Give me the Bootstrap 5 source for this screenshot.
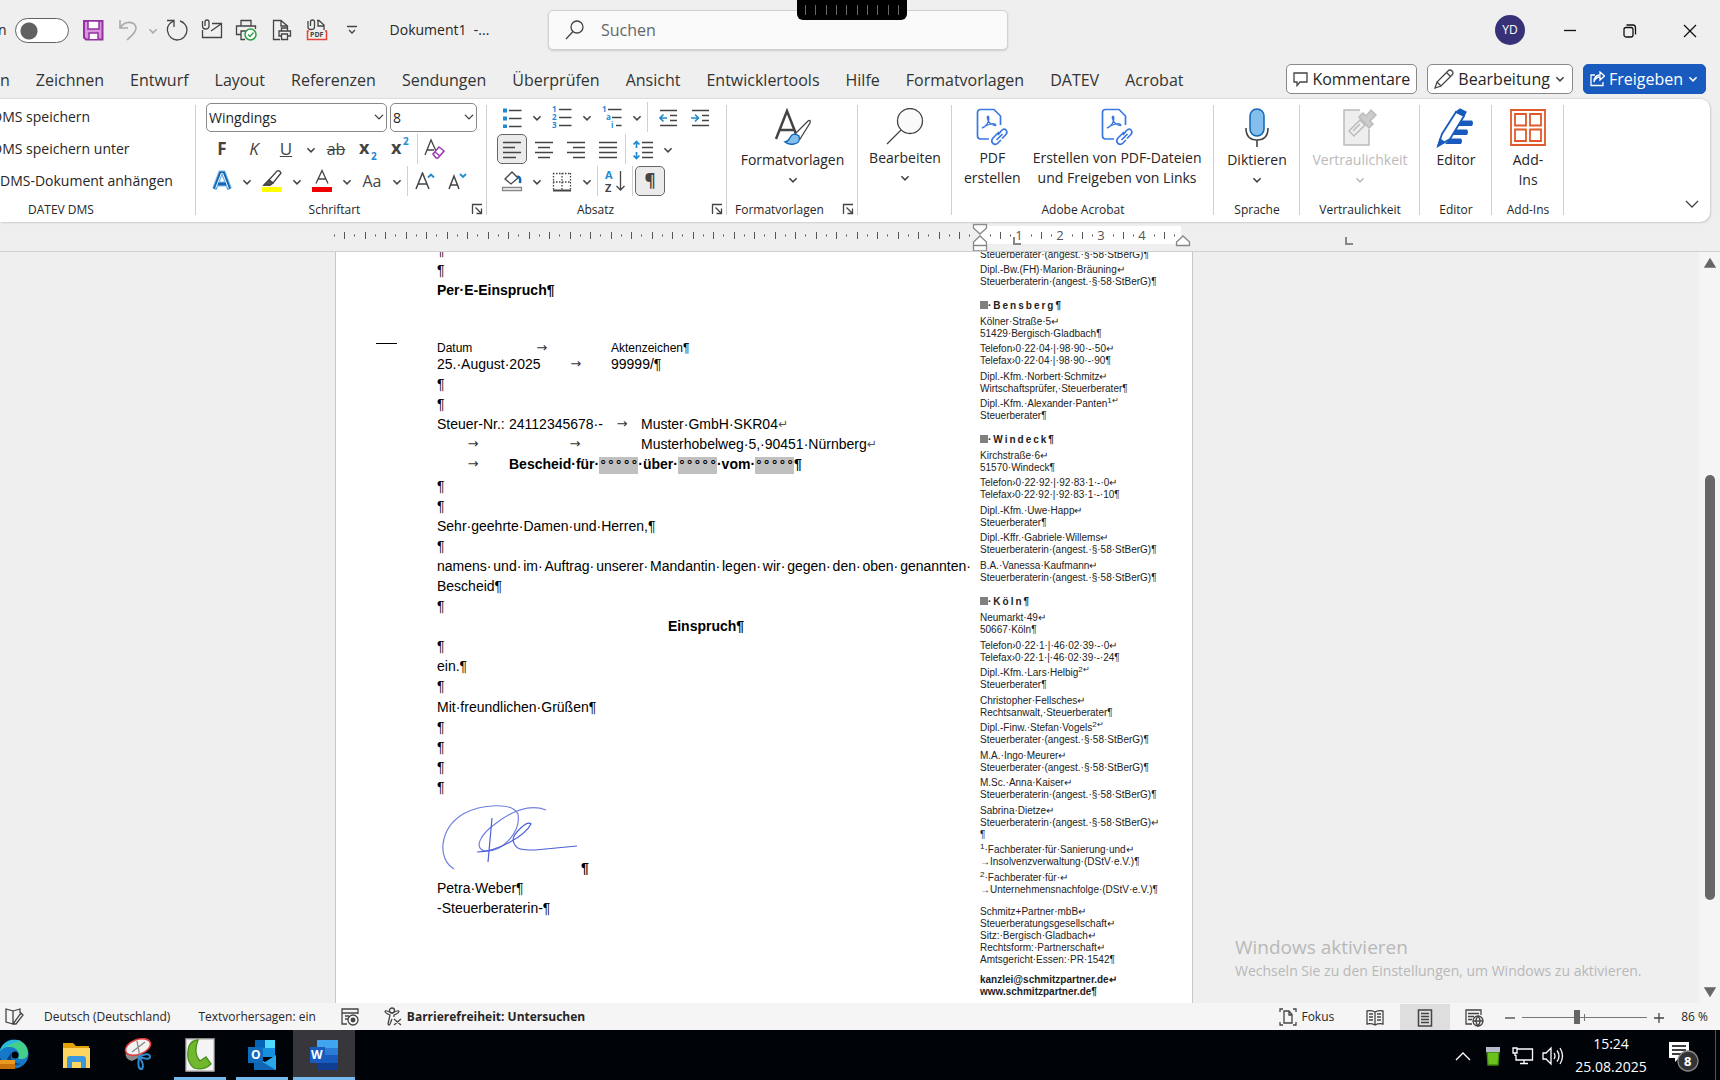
<!DOCTYPE html>
<html lang="de">
<head>
    <meta charset="UTF-8">
    <meta name="viewport" content="width=device-width, initial-scale=1.0">
    <title>Dokument1 - Word</title>
    <link href="https://cdn.jsdelivr.net/npm/bootstrap@5.3.0/dist/css/bootstrap.min.css" rel="stylesheet">
    <style>
        body {
            font-family: "Open Sans", "Noto Sans", sans-serif;
            font-size: 14px;
            line-height: 20px;
            color: #262626;
            background: #efefef;
        }

        button {
            border: 0;
            background: none;
            padding: 0;
            color: inherit;
        }

        svg {
            flex: none;
            fill: none;
            stroke: #444;
            stroke-width: 1.3;
        }

        /* Titelleiste */
        .title-bar { height: 60px; }
        .quick-access { width: 548px; }
        .quick-access button { width: 35px; }
        .quick-access .arrow-btn { width: 14px; }

        .auto-save {
            appearance: none;
            width: 54px;
            height: 25px;
            margin: 0 7px 0 8px;
            border: 1px solid #616161;
            border-radius: 13px;
            background: #fff radial-gradient(circle at 13px 12px, #616161 8px, transparent 9px);
        }

        .auto-save-name { margin-left: -2px; }

        .search-box {
            width: 460px;
            height: 40px;
            border: 1px solid #d1d1d1;
            border-radius: 5px;
            background: #fafafa;
            box-shadow: 0 1px 2px #ccc;
        }

        .search-box input {
            border: 0;
            background: none;
            outline: 0;
            font-size: 16px;
        }

        .search-box input::placeholder { color: #666; }
        .window-btn { width: 60px; height: 30px; }

        .avatar {
            width: 30px;
            height: 30px;
            border-radius: 50%;
            background: #373277;
            color: #fff;
            font-size: 12px;
        }

        .session-grip {
            top: 0;
            left: 797px;
            width: 110px;
            height: 20px;
            padding: 0 8px;
            background: #000;
            border-radius: 0 0 6px 6px;
        }

        .session-grip i { width: 1px; height: 10px; background: #666; }

        /* Registerkarten */
        .tab-row { height: 38px; font-size: 16px; }
        .tab-row .nav-link { padding: 2px 13px 0; color: #333; }
        .tab-row nav { margin-left: -22px; }
        .tab-actions { gap: 10px; margin-right: 14px; }

        .action-btn {
            height: 30px;
            padding: 0 6px;
            border: 1px solid #888;
            border-radius: 5px;
            background: #fff;
            font-size: 16px;
        }

        .action-btn.share { background: #185abd; border-color: #185abd; color: #fff; }
        .share svg { stroke: #fff; }

        /* Menüband */
        .ribbon {
            height: 124px;
            margin-right: 10px;
            background: #fff;
            border-top: 1px solid #ddd;
            border-radius: 0 10px 10px 0;
            box-shadow: 1px 1px 2px #ccc;
        }

        .ribbon-group { height: 123px; padding-top: 2px; }

        .ribbon-group::after {
            content: "";
            position: absolute;
            right: 0;
            top: 6px;
            bottom: 7px;
            width: 1px;
            background: #d0d0d0;
        }

        .group-name { height: 22px; font-size: 12px; }
        .tool-row { height: 32px; }
        .g-dms { width: 196px; }
        .clipped { margin-left: -8px; }
        .g-font { width: 291px; padding-left: 10px; }
        .g-para { width: 240px; padding-left: 9px; }
        .g-style { width: 131px; }
        .g-edit { width: 94px; }
        .g-acro { width: 262px; }
        .g-voice { width: 86px; }
        .g-label { width: 120px; color: #bbb; }
        .g-small { width: 72px; }
        .tool { width: 30px; height: 30px; margin: 0 1px; border-radius: 5px; font-size: 17px; color: #444; }
        .tool.active { border: 1px solid #666; background: #ebebeb; }
        .drop { width: 18px; height: 30px; }
        .rule { width: 1px; height: 30px; margin: 0 1px; background: #d0d0d0; }
        .launcher { right: 4px; bottom: 7px; }
        .big-tool { min-height: 88px; margin-top: 7px; }
        .big-tool svg { margin-bottom: 2px; }
        .ribbon text { stroke: none; }

        .font-select {
            height: 29px;
            padding: 0 18px 0 2px;
            border: 1px solid #888;
            border-radius: 5px;
            background-position: right 2px center;
            background-size: 10px;
            font-size: 14px;
        }

        .family-select { width: 181px; margin-right: 3px; }
        .size-select { width: 87px; }

        /* Lineal */
        .ruler { height: 30px; border-bottom: 1px solid #d0d0d0; }
        .ruler text { font-size: 13px; fill: #555; stroke: none; }

        /* Dokument */
        .paper {
            width: 858px;
            margin-left: 335px;
            padding-left: 101px;
            background: #fff;
            border: solid #c8c8c8;
            border-width: 0 1px;
            font-family: "Liberation Sans", Arial, sans-serif;
            color: #000;
        }

        .letter { width: 538px; margin-top: -12px; font-size: 14px; line-height: 20px; }
        .letter p { margin: 0; min-height: 20px; white-space: nowrap; }
        .letter .full-line { width: 534px; }
        .letter .caption { font-size: 12px; line-height: 12px; min-height: 12px; margin-top: 42px; }
        .tab-mark { font-family: "DejaVu Sans", sans-serif; font-size: 13px; color: #333; text-align: center; }
        .return-mark { font-family: "DejaVu Sans", sans-serif; font-size: 12px; color: #555; }
        .stop-1 { width: 72px; }
        .stop-2 { width: 132px; }
        .stop-wide { width: 174px; }

        .field {
            background: #c0c0c0;
            font-family: "Liberation Mono", monospace;
            font-size: 13px;
            padding: 1px 0;
        }

        .fold-mark { left: 40px; top: 91px; width: 21px; height: 1px; background: #000; }
        .letter .closing { margin-top: 1px; }
        .signature { height: 81px; }

        .letterhead {
            width: 210px;
            margin: -3px 0 0 5px;
            font-size: 10px;
            line-height: 12px;
            color: #222;
            white-space: nowrap;
        }

        .letterhead p { margin: 0 0 3px; }
        .letterhead p:nth-of-type(even) { margin-bottom: 4px; }
        .letterhead h6 { margin: 12px 0 4px; font-size: 10px; line-height: 12px; font-weight: 700; letter-spacing: 2px; }
        .letterhead h6 i { display: inline-block; width: 8px; height: 8px; background: #808080; }
        .letterhead sup { font-size: 8px; line-height: 0; }
        .letterhead .imprint { margin-top: 10px; }
        .letterhead .web { margin-top: 8px; }

        .activation { left: 1235px; bottom: 21px; color: #b8b8b8; font-size: 14px; line-height: 22px; }
        .activation strong { font-size: 19px; font-weight: 400; line-height: 24px; }

        .scroll-track { width: 21px; background: #f5f5f5; }
        .scroll-thumb { width: 10px; height: 425px; margin-top: 205px; border-radius: 5px; background: #686868; }

        /* Statusleiste */
        .status-bar { height: 27px; padding-top: 1px; background: #f5f5f5; font-size: 12px; }
        .view-btn { width: 50px; height: 26px; }
        .view-btn.active { background: #dedede; }

        .zoom-range {
            appearance: none;
            width: 125px;
            height: 14px;
            margin: 0 6px;
            background: linear-gradient(#777, #777) center / 100% 1px no-repeat,
                linear-gradient(#777, #777) center / 1px 7px no-repeat;
        }

        .zoom-range::-webkit-slider-thumb { appearance: none; width: 6px; height: 14px; background: #666; }

        /* Taskleiste */
        .task-bar { height: 50px; background: #000308; color: #fff; }
        .task-bar svg { stroke: #fff; }
        .task-list { margin-left: -17px; }
        .task-btn { width: 62px; height: 50px; }
        .task-btn.running::after { content: ""; position: absolute; left: 5px; right: 5px; bottom: 0; height: 3px; background: #76b9ed; }
        .task-btn.current { background: #37373b; }
        .task-btn.current::after { left: 0; right: 0; }
        .tray-btn { width: 30px; }
        .clock { width: 86px; line-height: 23px; }
        .notice-btn { width: 53px; }
        .show-desktop { width: 5px; height: 50px; border-left: 1px solid #555; }
    </style>
</head>
<body class="vh-100 d-flex flex-column overflow-hidden">
    <svg class="d-none">
        <symbol id="down" viewBox="0 0 10 10"><path d="M2 3.5 5 6.5 8 3.5"/></symbol>
        <symbol id="launch" viewBox="0 0 12 12"><path d="M1.500 11V1.500H11M4.500 4.500 10 10M10.500 5.500V10.500H5.500"/></symbol>
        <symbol id="pdf-link" viewBox="0 0 32 38">
            <g stroke="#3a78e0" stroke-width="1.7">
                <path d="M13 31H4.500Q1.500 31 1.500 28V4.500Q1.500 1.500 4.500 1.500H18L24.500 8V17"/>
                <path d="M6 20C10 19 14 13 12.500 8.500C11 7 10 12 15 16C19 18 21 18 19 16C16 15 10 17 6 20Z" stroke-width="1.300"/>
                <path d="M23 24 20.500 26.500 17 30Q14.500 33 17 35.500Q19.500 37.500 22 35L25 32M22 27 25.500 22.500Q28 20 30 22Q32 24.500 29.500 27L26 30.500M20.500 32 26.500 26"/>
            </g>
        </symbol>
    </svg>

    <!-- Titelleiste -->
    <header class="title-bar d-flex align-items-center flex-shrink-0 position-relative">
        <div class="quick-access d-flex align-items-center flex-shrink-0">
            <label class="auto-save-name" for="autoSave">n</label>
            <input type="checkbox" class="auto-save" id="autoSave">
            <button aria-label="Speichern"><svg width="22" height="22"><path d="M2 2H20.500V20.500H4L2 18.500Z" fill="#d994dd" stroke="#9332a0" stroke-width="2"/><path d="M6 2H17V10H6ZM7 20V14H16V20" fill="#fff" stroke="#9332a0" stroke-width="1.500"/></svg></button>
            <button aria-label="Rückgängig"><svg width="20" height="22"><path d="M2 1V9H10M2 9C7 1 17 2 18 9C18 14 13 17 9 21" stroke="#aaa" stroke-width="1.600"/></svg></button>
            <button class="arrow-btn" aria-label="Mehr"><svg width="12" height="12" style="stroke:#aaa"><use href="#down"/></svg></button>
            <button aria-label="Wiederholen"><svg width="22" height="22"><path d="M1 1.500H8V8M8 2C3 4 1 8 1.500 12C2.500 18 7 21 11 21C17 21 21 16 21 11C21 7 18 3 14 2"/></svg></button>
            <button aria-label="Als Anlage senden"><svg width="22" height="22"><path d="M11 4.500H20.500V18.500H1.500V11M10 12 20 5M1.500 2V7Q1.500 10 4.500 10Q8 10 8 7V3Q8 1 6 1Q4 1 4 3V7"/></svg></button>
            <button aria-label="Schnelldruck"><svg width="24" height="22"><path d="M6 7V1.500H16V7M10 20.500H6V12H14M6 15.500H1.500V7H20.500V10"/><circle cx="15.500" cy="15.500" r="5.500" fill="#fff" stroke="#2f9e44" stroke-width="1.500"/><path d="M13 15.500 15 17.500 18.500 13.500" stroke="#2f9e44"/></svg></button>
            <button aria-label="Seitenansicht"><svg width="20" height="22"><path d="M8 20.500H1.500V1.500H9L15.500 7V9M9 1.500V7H15M9.500 12V9H15.500V12M9.500 17H7V12H18.500V17H16M9.500 15H15.500V20.500H9.500Z"/></svg></button>
            <button aria-label="Als PDF senden"><svg width="22" height="22"><path d="M11 1.500H13L18 6V11M12 2V7H18M2 2V8Q2 10.500 5 10.500Q8.500 10.500 8.500 8V3Q8.500 1 6.500 1Q4.500 1 4.500 3V7"/><path d="M3 12H1.500V20.500H20.500V12H19" stroke="#e5443b" stroke-width="1.500"/><text x="4" y="18" font-size="7" font-weight="700" fill="#444" stroke="none">PDF</text></svg></button>
            <button aria-label="Anpassen"><svg width="12" height="12"><path d="M1 1.500H11M3 5 6 8 9 5"/></svg></button>
            <span class="text-nowrap ps-3 ms-1">Dokument1 &nbsp;-...</span>
        </div>
        <form class="search-box d-flex align-items-center flex-shrink-1">
            <svg class="ms-3" width="20" height="20"><circle cx="12" cy="7" r="6"/><path d="M8 11.500 1 19"/></svg>
            <input class="flex-grow-1 ms-3 ps-0" type="text" placeholder="Suchen" aria-label="Suchen">
        </form>
        <div class="session-grip position-absolute d-flex align-items-center justify-content-between"><i></i><i></i><i></i><i></i><i></i><i></i><i></i><i></i><i></i><i></i></div>
        <div class="d-flex ms-auto">
            <button class="window-btn d-flex justify-content-center"><span class="avatar d-flex align-items-center justify-content-center">YD</span></button>
            <button class="window-btn" aria-label="Minimieren"><svg width="14" height="14"><path d="M1 6.500H13" stroke="#111"/></svg></button>
            <button class="window-btn" aria-label="Verkleinern"><svg width="14" height="14"><g stroke="#111"><rect x="1" y="3.500" width="9" height="9.500" rx="2"/><path d="M3.500 1H10Q12.500 1 12.500 4V10.500"/></g></svg></button>
            <button class="window-btn" aria-label="Schließen"><svg width="14" height="14"><path d="M1 1 13 13M13 1 1 13" stroke="#111"/></svg></button>
        </div>
    </header>

    <!-- Registerkarten -->
    <div class="tab-row d-flex align-items-center flex-shrink-0">
        <nav class="nav flex-nowrap text-nowrap">
            <a class="nav-link" href="#">en</a>
            <a class="nav-link" href="#">Zeichnen</a>
            <a class="nav-link" href="#">Entwurf</a>
            <a class="nav-link" href="#">Layout</a>
            <a class="nav-link" href="#">Referenzen</a>
            <a class="nav-link" href="#">Sendungen</a>
            <a class="nav-link" href="#">Überprüfen</a>
            <a class="nav-link" href="#">Ansicht</a>
            <a class="nav-link" href="#">Entwicklertools</a>
            <a class="nav-link" href="#">Hilfe</a>
            <a class="nav-link" href="#">Formatvorlagen</a>
            <a class="nav-link" href="#">DATEV</a>
            <a class="nav-link" href="#">Acrobat</a>
        </nav>
        <div class="tab-actions d-flex ms-auto text-nowrap">
            <button class="action-btn d-flex align-items-center gap-1"><svg width="15" height="16"><path d="M1 2H14V11H7L4 14.500V11H1Z"/></svg>Kommentare</button>
            <button class="action-btn d-flex align-items-center gap-1"><svg width="20" height="20"><path d="M1 19 3 13 14 2Q16 0 18 2Q20 4 18 6L7 17ZM12.500 3.500 16.500 7.500M3 13 7 17"/></svg>Bearbeitung<svg width="12" height="12"><use href="#down"/></svg></button>
            <button class="action-btn share d-flex align-items-center gap-1"><svg width="15" height="16"><path d="M5 4H1V14.500H13V11M4 11C5 7 7 6 10 6V9L14.500 5 10 1V4C6 4 4 7 4 11Z"/></svg>Freigeben<svg width="12" height="12"><use href="#down"/></svg></button>
        </div>
    </div>

    <!-- Menüband -->
    <div class="ribbon d-flex flex-shrink-0 position-relative text-nowrap">
        <section class="ribbon-group g-dms d-flex flex-column position-relative">
            <button class="tool-row clipped text-start">DMS speichern</button>
            <button class="tool-row clipped text-start">DMS speichern unter</button>
            <button class="tool-row text-start">DMS-Dokument anhängen</button>
            <div class="group-name mt-auto ps-4 ms-1">DATEV DMS</div>
        </section>

        <section class="ribbon-group g-font d-flex flex-column position-relative">
            <div class="tool-row d-flex align-items-center">
                <select class="form-select font-select family-select" aria-label="Schriftart"><option>Wingdings</option></select>
                <select class="form-select font-select size-select" aria-label="Schriftgrad"><option>8</option></select>
            </div>
            <div class="tool-row d-flex align-items-center">
                <button class="tool fw-bold">F</button>
                <button class="tool fst-italic">K</button>
                <button class="tool text-decoration-underline">U</button>
                <button class="drop" aria-label="Unterstreichung"><svg width="12" height="12"><use href="#down"/></svg></button>
                <button class="tool text-decoration-line-through fs-6">ab</button>
                <button class="tool" aria-label="Tiefgestellt"><svg width="20" height="24"><text x="1" y="17" font-size="18" font-weight="700" fill="#444">x</text><text x="13" y="23" font-size="10" font-weight="700" fill="#1f8ad2">2</text></svg></button>
                <button class="tool" aria-label="Hochgestellt"><svg width="20" height="24"><text x="1" y="17" font-size="18" font-weight="700" fill="#444">x</text><text x="13" y="8" font-size="10" font-weight="700" fill="#1f8ad2">2</text></svg></button>
                <span class="rule"></span>
                <button class="tool" aria-label="Formatierung löschen"><svg width="22" height="22"><path d="M1 17 7 2 12 13M3 12H10"/><path d="M9 16 15 9 20 13 14 20H12Z" fill="#fff" stroke="#9b3fae" stroke-width="1.600"/><path d="M11 14 16 18" stroke="#9b3fae" stroke-width="1.600"/></svg></button>
            </div>
            <div class="tool-row d-flex align-items-center">
                <button class="tool" aria-label="Texteffekte"><svg width="20" height="22"><path d="M2.500 19 8.500 3H11.500L17.500 19M6 14H14" stroke="#83beec" stroke-width="5"/><path d="M2.500 19 8.500 3H11.500L17.500 19M6 14H14" stroke="#1267b4" stroke-width="3"/><path d="M3.500 18.500 9.500 3M10.500 3 16.500 18.500" stroke="#fff" stroke-width="1"/></svg></button>
                <button class="drop" aria-label="Texteffekte wählen"><svg width="12" height="12"><use href="#down"/></svg></button>
                <button class="tool" aria-label="Hervorheben"><svg width="22" height="24"><path d="M8 11 16 2Q19 1 20 4L12 14ZM8 11 3 16H9L12 14"/><path d="M8 11 3 16H9L12 14Z" fill="#555"/><path d="M1 20.500H21" stroke="#ff0" stroke-width="5"/></svg></button>
                <button class="drop" aria-label="Hervorhebungsfarbe"><svg width="12" height="12"><use href="#down"/></svg></button>
                <button class="tool" aria-label="Schriftfarbe"><svg width="22" height="24"><path d="M5 14.500 11 1.500 17 14.500M7 10H15"/><path d="M1 20.500H21" stroke="#f00000" stroke-width="5"/></svg></button>
                <button class="drop" aria-label="Schriftfarbe wählen"><svg width="12" height="12"><use href="#down"/></svg></button>
                <button class="tool fs-6">Aa</button>
                <button class="drop" aria-label="Groß- und Kleinschreibung"><svg width="12" height="12"><use href="#down"/></svg></button>
                <span class="rule"></span>
                <button class="tool" aria-label="Größer"><svg width="20" height="20"><path d="M1 17 7.500 1 14 17M3.500 12H12" stroke-width="1.500"/><path d="M13 5.500 16 2.500 19 5.500" stroke="#1f8ad2" stroke-width="1.800"/></svg></button>
                <button class="tool" aria-label="Kleiner"><svg width="20" height="20"><path d="M2 17 7 4 12 17M4 13H10" stroke-width="1.500"/><path d="M13 2 16 5 19 2" stroke="#1f8ad2" stroke-width="1.800"/></svg></button>
            </div>
            <div class="group-name mt-auto text-center pe-4">Schriftart</div>
            <button class="launcher position-absolute d-flex" aria-label="Schriftart öffnen"><svg width="12" height="12"><use href="#launch"/></svg></button>
        </section>

        <section class="ribbon-group g-para d-flex flex-column position-relative">
            <div class="tool-row d-flex align-items-center">
                <button class="tool" aria-label="Aufzählung"><svg width="20" height="20"><path d="M7 2.500H19.500M7 10.500H19.500M7 18.500H19.500" stroke-width="1.600"/><path d="M1 2.500H5M1 10.500H5M1 18.500H5" stroke="#1f8ad2" stroke-width="4"/></svg></button>
                <button class="drop" aria-label="Aufzählungszeichen"><svg width="12" height="12"><use href="#down"/></svg></button>
                <button class="tool" aria-label="Nummerierung"><svg width="20" height="22"><path d="M7 3.500H19.500M7 11.500H19.500M7 19.500H19.500" stroke-width="1.600"/><g font-size="8" font-weight="700" fill="#1f8ad2"><text x="0" y="6">1</text><text x="0" y="14">2</text><text x="0" y="22">3</text></g></svg></button>
                <button class="drop" aria-label="Nummerierungsart"><svg width="12" height="12"><use href="#down"/></svg></button>
                <button class="tool" aria-label="Liste mit mehreren Ebenen"><svg width="20" height="22"><path d="M6 3.500H19.500M10 11.500H19.500M14 19.500H19.500" stroke-width="1.600"/><g font-size="8" font-weight="700" fill="#1f8ad2"><text x="0" y="6">1</text><text x="4" y="14">a</text><text x="9" y="22">i</text></g></svg></button>
                <button class="drop" aria-label="Listenart"><svg width="12" height="12"><use href="#down"/></svg></button>
                <span class="rule me-1"></span>
                <button class="tool" aria-label="Einzug verkleinern"><svg width="18" height="20"><path d="M1 2.500H18M11 7.500H18M11 12.500H18M1 17.500H18" stroke-width="1.600"/><path d="M8 10H1.500M4.500 6.500 1 10 4.500 13.500" stroke="#1f8ad2" stroke-width="1.600"/></svg></button>
                <button class="tool" aria-label="Einzug vergrößern"><svg width="18" height="20"><path d="M1 2.500H18M11 7.500H18M11 12.500H18M1 17.500H18" stroke-width="1.600"/><path d="M0 10H7M4 6.500 7.500 10 4 13.500" stroke="#1f8ad2" stroke-width="1.600"/></svg></button>
            </div>
            <div class="tool-row d-flex align-items-center">
                <button class="tool active" aria-label="Linksbündig"><svg width="18" height="18"><path d="M0 1.500H18M0 6.500H12M0 11.500H18M0 16.500H13" stroke-width="1.600"/></svg></button>
                <button class="tool" aria-label="Zentriert"><svg width="18" height="18"><path d="M0 1.500H18M3 6.500H15M0 11.500H18M3 16.500H15" stroke-width="1.600"/></svg></button>
                <button class="tool" aria-label="Rechtsbündig"><svg width="18" height="18"><path d="M0 1.500H18M6 6.500H18M0 11.500H18M6 16.500H18" stroke-width="1.600"/></svg></button>
                <button class="tool" aria-label="Blocksatz"><svg width="18" height="18"><path d="M0 1.500H18M0 6.500H18M0 11.500H18M0 16.500H18" stroke-width="1.600"/></svg></button>
                <span class="rule"></span>
                <button class="tool" aria-label="Zeilenabstand"><svg width="20" height="20"><path d="M9 2.500H20M9 7.500H20M9 12.500H20M9 17.500H20" stroke-width="1.600"/><path d="M3.500 1.500V8M3.500 12V18.500M.5 4.500 3.500 1.500 6.500 4.500M.5 15.500 3.500 18.500 6.500 15.500" stroke="#1f8ad2" stroke-width="1.700"/></svg></button>
                <button class="drop" aria-label="Abstände"><svg width="12" height="12"><use href="#down"/></svg></button>
            </div>
            <div class="tool-row d-flex align-items-center">
                <button class="tool" aria-label="Schattierung"><svg width="22" height="22"><path d="M4 9 11 2 17 8 10 14Z"/><path d="M16 7Q20 6 19 13" stroke="#1267b4" stroke-width="2.500"/><path d="M1.500 17.500H20.500V20.500H1.500Z" stroke="#888" fill="#fff"/></svg></button>
                <button class="drop" aria-label="Schattierungsfarbe"><svg width="12" height="12"><use href="#down"/></svg></button>
                <button class="tool" aria-label="Rahmen"><svg width="20" height="20"><path d="M1 1.500H19M1.500 1V18M18.500 1V18M10 1V18M1 10H19" stroke-dasharray="1.500 1.500"/><path d="M1 18.500H19" stroke-width="2"/></svg></button>
                <button class="drop" aria-label="Rahmenart"><svg width="12" height="12"><use href="#down"/></svg></button>
                <span class="rule"></span>
                <button class="tool" aria-label="Sortieren"><svg width="22" height="24"><text x="1" y="10" font-size="11" font-weight="700" fill="#1f8ad2">A</text><text x="1" y="23" font-size="11" font-weight="700" fill="#444">Z</text><path d="M16.500 2V21M12.500 17 16.500 21 20.500 17"/></svg></button>
                <span class="rule"></span>
                <button class="tool active fw-bold">¶</button>
            </div>
            <div class="group-name mt-auto text-center pe-4 me-2">Absatz</div>
            <button class="launcher position-absolute d-flex" aria-label="Absatz öffnen"><svg width="12" height="12"><use href="#launch"/></svg></button>
        </section>

        <section class="ribbon-group g-style d-flex flex-column position-relative">
            <button class="big-tool d-flex flex-column align-items-center">
                <svg width="40" height="40"><path d="M3 31 14 3 25 31M7 22H21" stroke-width="2.500"/><path d="M22 26 35 13Q38 11 37 15L27 31Z" fill="#fff"/><path d="M12 34C16 34 16 30 19 27Q22 25 26 28Q28 35 21 36Q15 37 12 34Z" fill="#83beec" stroke="#1267b4"/></svg>
                Formatvorlagen<svg width="12" height="12" class="mt-1"><use href="#down"/></svg>
            </button>
            <div class="group-name mt-auto ps-2">Formatvorlagen</div>
            <button class="launcher position-absolute d-flex" aria-label="Formatvorlagen öffnen"><svg width="12" height="12"><use href="#launch"/></svg></button>
        </section>

        <section class="ribbon-group g-edit d-flex flex-column position-relative">
            <button class="big-tool d-flex flex-column align-items-center">
                <svg width="40" height="38"><circle cx="25" cy="13" r="12.500" fill="#fafafa"/><path d="M16 22 2 36"/></svg>
                Bearbeiten<svg width="12" height="12" class="mt-1"><use href="#down"/></svg>
            </button>
        </section>

        <section class="ribbon-group g-acro d-flex flex-column position-relative">
            <div class="d-flex">
                <button class="big-tool d-flex flex-column align-items-center px-2 ms-1"><svg width="32" height="38"><use href="#pdf-link"/></svg><span>PDF<br>erstellen</span></button>
                <button class="big-tool d-flex flex-column align-items-center ps-1"><svg width="32" height="38"><use href="#pdf-link"/></svg><span>Erstellen von PDF-Dateien<br>und Freigeben von Links</span></button>
            </div>
            <div class="group-name mt-auto text-center">Adobe Acrobat</div>
        </section>

        <section class="ribbon-group g-voice d-flex flex-column position-relative">
            <button class="big-tool d-flex flex-column align-items-center">
                <svg width="28" height="40"><rect x="7" y="1" width="14" height="27" rx="7" fill="#83beec" stroke="#1267b4" stroke-width="1.500"/><path d="M3 20Q3 32 14 32Q25 32 25 20M14 32V39" stroke-width="1.600"/></svg>
                Diktieren<svg width="12" height="12" class="mt-1"><use href="#down"/></svg>
            </button>
            <div class="group-name mt-auto text-center">Sprache</div>
        </section>

        <section class="ribbon-group g-label d-flex flex-column position-relative">
            <button class="big-tool d-flex flex-column align-items-center" disabled>
                <svg width="40" height="40"><g stroke="#bbb" stroke-width="1.500"><path d="M20 2H4V37H29V21" fill="#eee"/><path d="M9 23 20 12 25 17 14 28ZM13 23 20 16" fill="#eee"/><path d="M19 9 23 5 26 8 31 2 36 7 30 13 33 16 29 20Z" fill="#ccc"/></g></svg>
                Vertraulichkeit<svg width="12" height="12" class="mt-1" style="stroke:#bbb"><use href="#down"/></svg>
            </button>
            <div class="group-name mt-auto text-center text-body">Vertraulichkeit</div>
        </section>

        <section class="ribbon-group g-small d-flex flex-column position-relative">
            <button class="big-tool d-flex flex-column align-items-center">
                <svg width="40" height="40"><path d="M22 12.500H36Q38 15 36 18H19ZM18 21.500H31Q33 24 31 27H14ZM14 30.500H25Q27 33 25 36H9Z" fill="#185abd" stroke="none"/><path d="M2 38 6 26 20 4 28 8 14 31Z" fill="#fff" stroke="#185abd" stroke-width="1.800"/><path d="M20 4 24 1 30 4 28 8ZM2 38 4 31 8 34Z" fill="#185abd" stroke="#185abd"/></svg>
                Editor
            </button>
            <div class="group-name mt-auto text-center">Editor</div>
        </section>

        <section class="ribbon-group g-small d-flex flex-column position-relative">
            <button class="big-tool d-flex flex-column align-items-center">
                <svg width="38" height="40"><path d="M2 2H36V37H2ZM6 6H17V17.500H6ZM21 6H32V17.500H21ZM6 21.500H17V33H6ZM21 21.500H32V33H21Z" stroke="#e0592a" stroke-width="1.800"/></svg>
                <span>Add-<br>Ins</span>
            </button>
            <div class="group-name mt-auto text-center">Add-Ins</div>
        </section>
        <button class="align-self-end ms-auto me-2 mb-2" aria-label="Menüband reduzieren"><svg width="20" height="18"><path d="M4 5 10 11 16 5"/></svg></button>
    </div>

    <!-- Lineal -->
    <div class="ruler flex-shrink-0">
        <svg class="d-block" width="1400" height="29">
            <defs>
                <pattern id="ticks" x="980" width="41" height="28" patternUnits="userSpaceOnUse">
                    <path d="M.5 10V17M20.500 10V17M10.500 12.500V14.500M30.500 12.500V14.500" stroke="#555" stroke-width="1"/>
                </pattern>
            </defs>
            <path d="M980 4H1181V22H980Z" fill="#fff" stroke="none"/>
            <path d="M333 0H975V28H333ZM984 0H1182V28H984Z" fill="url(#ticks)" stroke="none"/>
            <path d="M1015 5H1026V18H1015ZM1056 5H1067V18H1056ZM1097 5H1108V18H1097ZM1138 5H1149V18H1138Z" fill="#fff" stroke="none"/>
            <g text-anchor="middle"><text x="1019" y="18">1</text><text x="1060" y="18">2</text><text x="1101" y="18">3</text><text x="1142" y="18">4</text></g>
            <path d="M973.500 2.500H986.500V6L980 12 973.500 6ZM973.500 29V20L980 14 986.500 20V29ZM973.500 23.500H986.500M1176.500 23.500V20L1183 14 1189.500 20V23.500Z" fill="#fff" stroke="#888"/>
            <path d="M1014 15V22H1021M1346 15V22H1353" stroke="#888" stroke-width="2"/>
        </svg>
    </div>

    <!-- Dokument -->
    <main class="d-flex flex-grow-1 overflow-hidden position-relative">
        <article class="paper d-flex flex-shrink-0 position-relative">
            <span class="fold-mark position-absolute"></span>
            <div class="letter flex-shrink-0">
                <p>¶</p>
                <p>¶</p>
                <p><b>Per·E-Einspruch¶</b></p>
                <p class="caption d-flex"><span class="stop-wide d-flex">Datum<span class="tab-mark flex-grow-1">→</span></span>Aktenzeichen¶</p>
                <p class="d-flex"><span class="stop-wide d-flex">25.·August·2025<span class="tab-mark flex-grow-1">→</span></span>99999/¶</p>
                <p>¶</p>
                <p>¶</p>
                <p class="d-flex"><span class="stop-1">Steuer-Nr.:</span><span class="stop-2 d-flex">24112345678·-<span class="tab-mark flex-grow-1">→</span></span>Muster·GmbH·SKR04<span class="return-mark">↵</span></p>
                <p class="d-flex"><span class="stop-1 tab-mark">→</span><span class="stop-2 tab-mark">→</span>Musterhobelweg·5,·90451·Nürnberg<span class="return-mark">↵</span></p>
                <p class="d-flex"><span class="stop-1 tab-mark">→</span><b>Bescheid·für·<span class="field">°°°°°</span>·über·<span class="field">°°°°°</span>·vom·<span class="field">°°°°°</span>¶</b></p>
                <p>¶</p>
                <p>¶</p>
                <p>Sehr·geehrte·Damen·und·Herren,¶</p>
                <p>¶</p>
                <p class="full-line d-flex justify-content-between"><span>namens·</span><span>und·</span><span>im·</span><span>Auftrag·</span><span>unserer·</span><span>Mandantin·</span><span>legen·</span><span>wir·</span><span>gegen·</span><span>den·</span><span>oben·</span><span>genannten·</span></p>
                <p>Bescheid¶</p>
                <p>¶</p>
                <p class="text-center"><b>Einspruch¶</b></p>
                <p>¶</p>
                <p>ein.¶</p>
                <p>¶</p>
                <p class="closing">Mit·freundlichen·Grüßen¶</p>
                <p>¶</p>
                <p>¶</p>
                <p>¶</p>
                <p>¶</p>
                <p class="signature d-flex align-items-end">
                    <svg width="144" height="76"><g stroke="#4a5fd8" stroke-width="1.200"><path d="M17 67C0 57 2 27 26 12C44 2 76 0 81 12C84 30 66 50 48 49C36 46 44 32 58 22C76 8 94 2 109 8" opacity=".8"/><path d="M55 16 51 60M40 50C60 50 88 34 94 22C90 18 76 32 76 38C78 48 84 48 98 48L140 44"/></g></svg><b>¶</b>
                </p>
                <p>Petra·Weber¶</p>
                <p>-Steuerberaterin-¶</p>
            </div>
            <aside class="letterhead flex-shrink-0">
                <p>Steuerberater·(angest.·§·58·StBerG)¶</p>
                <p>Dipl.-Bw.(FH)·Marion·Bräuning↵<br>Steuerberaterin·(angest.·§·58·StBerG)¶</p>
                <h6><i></i>·Bensberg¶</h6>
                <p>Kölner·Straße·5↵<br>51429·Bergisch·Gladbach¶</p>
                <p>Telefon›0·22·04·|·98·90·-·50↵<br>Telefax›0·22·04·|·98·90·-·90¶</p>
                <p>Dipl.-Kfm.·Norbert·Schmitz↵<br>Wirtschaftsprüfer,·Steuerberater¶</p>
                <p>Dipl.-Kfm.·Alexander·Panten<sup>1↵</sup><br>Steuerberater¶</p>
                <h6><i></i>·Windeck¶</h6>
                <p>Kirchstraße·6↵<br>51570·Windeck¶</p>
                <p>Telefon›0·22·92·|·92·83·1·-·0↵<br>Telefax›0·22·92·|·92·83·1·-·10¶</p>
                <p>Dipl.-Kfm.·Uwe·Happ↵<br>Steuerberater¶</p>
                <p>Dipl.-Kffr.·Gabriele·Willems↵<br>Steuerberaterin·(angest.·§·58·StBerG)¶</p>
                <p>B.A.·Vanessa·Kaufmann↵<br>Steuerberaterin·(angest.·§·58·StBerG)¶</p>
                <h6><i></i>·Köln¶</h6>
                <p>Neumarkt·49↵<br>50667·Köln¶</p>
                <p>Telefon›0·22·1·|·46·02·39·-·0↵<br>Telefax›0·22·1·|·46·02·39·-·24¶</p>
                <p>Dipl.-Kfm.·Lars·Helbig<sup>2↵</sup><br>Steuerberater¶</p>
                <p>Christopher·Fellsches↵<br>Rechtsanwalt,·Steuerberater¶</p>
                <p>Dipl.-Finw.·Stefan·Vogels<sup>2↵</sup><br>Steuerberater·(angest.·§·58·StBerG)¶</p>
                <p>M.A.·Ingo·Meurer↵<br>Steuerberater·(angest.·§·58·StBerG)¶</p>
                <p>M.Sc.·Anna·Kaiser↵<br>Steuerberaterin·(angest.·§·58·StBerG)¶</p>
                <p>Sabrina·Dietze↵<br>Steuerberaterin·(angest.·§·58·StBerG)↵<br>¶</p>
                <p><sup>1</sup>·Fachberater·für·Sanierung·und↵<br>→Insolvenzverwaltung·(DStV·e.V.)¶</p>
                <p><sup>2</sup>·Fachberater·für·↵<br>→Unternehmensnachfolge·(DStV·e.V.)¶</p>
                <p class="imprint">Schmitz+Partner·mbB↵<br>Steuerberatungsgesellschaft↵<br>Sitz:·Bergisch·Gladbach↵<br>Rechtsform:·Partnerschaft↵<br>Amtsgericht·Essen:·PR·1542¶</p>
                <p class="web fw-bold">kanzlei@schmitzpartner.de↵<br>www.schmitzpartner.de¶</p>
            </aside>
        </article>
        <div class="activation position-absolute text-nowrap"><strong>Windows aktivieren</strong><br>Wechseln Sie zu den Einstellungen, um Windows zu aktivieren.</div>
        <div class="scroll-track ms-auto d-flex flex-column align-items-center py-1">
            <svg width="14" height="14"><path d="M2 11 7 3 12 11Z" fill="#666" stroke="#666"/></svg>
            <div class="scroll-thumb"></div>
            <svg class="mt-auto" width="14" height="14"><path d="M2 3 7 11 12 3Z" fill="#666" stroke="#666"/></svg>
        </div>
    </main>

    <!-- Statusleiste -->
    <footer class="status-bar d-flex align-items-center flex-shrink-0 text-nowrap">
        <button class="ms-1" aria-label="Rechtschreibung"><svg width="20" height="20"><path d="M9 17V4L2 2V15L9 17M9 4 16 2V6M9 17 17 6 19 8 12 17Z"/></svg></button>
        <button class="ms-3 ps-1">Deutsch (Deutschland)</button>
        <button class="ms-4 ps-1">Textvorhersagen: ein</button>
        <button class="ms-4" aria-label="Makro aufzeichnen"><svg width="20" height="20"><path d="M7 17H2V2H18V7M2 6H18M5 9H9M5 12H8"/><circle cx="13" cy="13" r="5"/><circle cx="13" cy="13" r="1.800" fill="#444"/></svg></button>
        <button class="ms-3 ps-2 fw-bold d-flex align-items-center gap-1"><svg width="19" height="20"><circle cx="8" cy="3.500" r="2.500"/><path d="M1 4Q1 6 6 8L4 17Q5 19 6 17L8 12M10 10V8Q15 6 15 4M1 4Q2 3 8 6Q14 3 15 4M10 12 17 18M17 12 10 18"/></svg>Barrierefreiheit: Untersuchen</button>
        <button class="ms-auto me-3 d-flex align-items-center gap-1"><svg width="18" height="18"><path d="M4 1H1V4M14 1H17V4M4 17H1V14M14 17H17V14M5 3H10L13 6.500V15H5ZM10 3V7H13"/></svg>Fokus</button>
        <button class="view-btn" aria-label="Lesemodus"><svg width="18" height="18"><path d="M9 3Q5 1 1 2V15Q5 14 9 16Q13 14 17 15V2Q13 1 9 3V16M3 5H7M3 8H7M3 11H7M11 5H15M11 8H15M11 11H15"/></svg></button>
        <button class="view-btn active" aria-label="Seitenlayout"><svg width="16" height="18"><path d="M1.500 1H14.500V17H1.500ZM4 4.500H12M4 7.500H12M4 10.500H12M4 13.500H12" stroke-width="1.500"/></svg></button>
        <button class="view-btn" aria-label="Weblayout"><svg width="20" height="18"><path d="M7 15H1V1H16V6M3 4.500H14M3 7.500H9M3 10.500H7"/><circle cx="13" cy="12" r="5"/><path d="M8 12H18M13 7Q9 12 13 17Q17 12 13 7"/></svg></button>
        <button class="ms-1" aria-label="Verkleinern"><svg width="12" height="12"><path d="M1 6H11"/></svg></button>
        <input type="range" class="zoom-range" min="10" max="190" value="88" aria-label="Zoom">
        <button aria-label="Vergrößern"><svg width="12" height="12"><path d="M1 6H11M6 1V11"/></svg></button>
        <button class="ms-3 me-2 pe-1">86 %</button>
    </footer>

    <!-- Taskleiste -->
    <div class="task-bar d-flex align-items-center flex-shrink-0">
        <div class="task-list d-flex">
            <button class="task-btn" aria-label="Edge"><svg width="30" height="32"><g stroke="none"><circle cx="15" cy="15" r="14.500" fill="#1678c8"/><path d="M1 12C4-2 28-4 29 14C29 21 20 21 19 19C22 14 17 7 10 8C5 8 2 10 1 12Z" fill="#43cf8a"/><path d="M1 12C4 0 18 0 22 2C12 4 6 8 1 12Z" fill="#2ab8e0"/><path d="M12 14Q10 24 22 25Q14 28 8 20Z" fill="#0c3f78"/><circle cx="16" cy="16" r="3.500" fill="#000308"/><path d="M1 21H16V30H1Z" fill="#c9720c"/><path d="M1 21H16V25H1Z" fill="#e89a20"/></g></svg></button>
            <button class="task-btn" aria-label="Explorer"><svg width="28" height="28"><g stroke="none"><path d="M1 2H11L14 5H27V12H1Z" fill="#e3a008"/><path d="M1 7H28V27H1Z" fill="#ffd561"/><path d="M5 27V18Q5 15 8 15H21Q24 15 24 18V27H19V21H10V27Z" fill="#3a96dd"/></g></svg></button>
            <button class="task-btn" aria-label="Ausschneiden"><svg width="30" height="34"><path d="M3 13Q1 21 9 23L17 19 22 12Z" fill="#8a8a8a" stroke="none"/><ellipse cx="15" cy="9" rx="13" ry="7.500" transform="rotate(-20 15 9)" fill="#f2f2f2" stroke="#e23b3b" stroke-width="1.600"/><path d="M14 3 17 19M22 4 9 14" stroke="#888"/><path d="M16 19Q25 14 27 18Q28 23 16 19Q22 27 19 31Q14 32 16 19" stroke="#2e8bd0" stroke-width="2"/></svg></button>
            <button class="task-btn running position-relative" aria-label="Telefonie"><svg width="30" height="34"><path d="M1 1H29V33H1Z" fill="#f4f4f4" stroke="#bbb"/><path d="M13 2Q8 15 15 23L21 19 26 26Q19 33 9 30Q0 23 4 8Q7 2 13 2Z" fill="#72b82e" stroke="#4b8f1d"/></svg></button>
            <button class="task-btn running position-relative" aria-label="Outlook"><svg width="30" height="32"><g stroke="none"><path d="M8 1H28V18H8Z" fill="#1490df"/><path d="M18 1H28V9H18Z" fill="#50d9ff"/><path d="M8 1H18V9H8Z" fill="#0364b8"/><path d="M7 16 18 23 29 16V31H7Z" fill="#28a8ea"/><path d="M7 18 29 31H7Z" fill="#1066b5"/><path d="M1 8H16V24H1Z" fill="#0f6cbd"/></g><text x="4" y="20" font-size="12" font-weight="700" fill="#fff" stroke="none">O</text></svg></button>
            <button class="task-btn running current position-relative" aria-label="Word"><svg width="30" height="32"><g stroke="none"><path d="M8 1H29V9H8Z" fill="#41a5ee"/><path d="M8 9H29V16H8Z" fill="#2b7cd3"/><path d="M8 16H29V24H8Z" fill="#185abd"/><path d="M8 24H29V31H8Z" fill="#103f91"/><path d="M1 8H16V24H1Z" fill="#185abd"/></g><text x="2" y="20" font-size="12" font-weight="700" fill="#fff" stroke="none">W</text></svg></button>
        </div>
        <div class="d-flex align-items-center ms-auto">
            <button class="tray-btn" aria-label="Ausgeblendete Symbole"><svg width="16" height="10"><path d="M1 9 8 2 15 9"/></svg></button>
            <button class="tray-btn" aria-label="Papierkorb"><svg width="16" height="20"><path d="M2 6H14L13 19H3Z" fill="#6cc21c" stroke="#3f8410"/><path d="M1 1H15V6H1Z" fill="#b9b9cc" stroke="none"/></svg></button>
            <button class="tray-btn" aria-label="Netzwerk"><svg width="22" height="18"><path d="M5 2H20.500V13H4V8M12 13V16.500M8 16.500H16M1 1H5V6H1ZM3 6V9"/></svg></button>
            <button class="tray-btn" aria-label="Lautstärke"><svg width="22" height="20"><path d="M1 7H4L9 2V18L4 13H1ZM12 7Q14 10 12 13M15 4.500Q19 10 15 15.500M18 2Q23 10 18 18"/></svg></button>
            <button class="clock">15:24<br>25.08.2025</button>
            <button class="notice-btn ps-1" aria-label="8 Benachrichtigungen"><svg width="32" height="34"><path d="M2 4H22V20H12L8 24V20H2Z" fill="#fff" stroke="none"/><path d="M5 8H19M5 12H19M5 16H19" stroke="#000"/><circle cx="21" cy="23" r="10" fill="#333" stroke="#888"/><text x="17" y="28" font-size="13" font-weight="700" fill="#fff" stroke="none">8</text></svg></button>
            <span class="ms-2 show-desktop"></span>
        </div>
    </div>

    <script src="https://cdn.jsdelivr.net/npm/bootstrap@5.3.0/dist/js/bootstrap.bundle.min.js"></script>
</body>
</html>
